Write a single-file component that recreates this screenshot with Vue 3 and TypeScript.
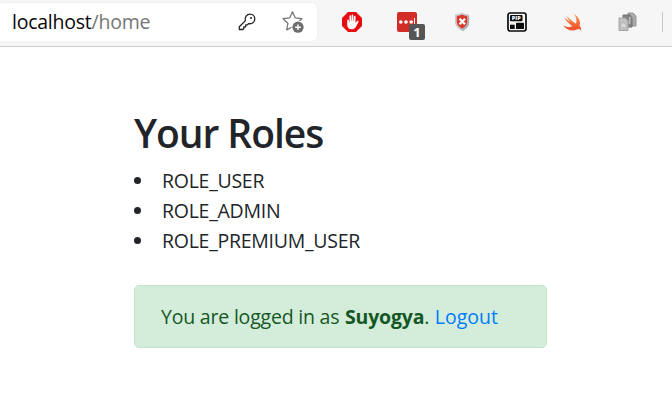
<script setup lang="ts">
const roles: string[] = ['ROLE_USER', 'ROLE_ADMIN', 'ROLE_PREMIUM_USER']
const username = 'Suyogya'
</script>

<template>
  <div class="page">
    <header class="toolbar">
      <div class="address">
        <span class="url">localhost<span class="path">/home</span></span>
        <svg class="key" width="20" height="20" viewBox="0 0 20 20" fill="none" stroke="#222" stroke-width="1.3" stroke-linejoin="round">
          <path d="M8.3 8.9C7.5 5.2 9.8 2.2 13 2.2c2.7 0 4.8 2 4.8 4.7 0 3.2-2.9 5.5-6.2 4.7l-1.2 1.3H8.7v1.9H6.8v1.9l-.9.8H2.3v-2.7z" />
          <circle cx="14" cy="6" r="1" fill="#222" stroke="none" />
        </svg>
        <svg class="star" width="24" height="24" viewBox="0 0 24 24">
          <path d="M11.5 1.8l2.8 6.1 6.6.8-4.900 4.600 1.200 6.600-5.700-3.200-5.800 3.200 1.200-6.600L2 8.700l6.700-.8z" fill="none" stroke="#757575" stroke-width="1.25" stroke-linejoin="round" />
          <circle cx="17" cy="17.2" r="6.4" fill="#fff" />
          <circle cx="17" cy="17.2" r="5.6" fill="#6e6e6e" />
          <path d="M14.2 17.2h5.6M17 14.4v5.6" stroke="#fff" stroke-width="1.4" />
        </svg>
      </div>
      <div class="extensions">
        <svg width="22" height="22" viewBox="0 0 22 22">
          <path d="M7 1h8l6 6v8l-6 6H7l-6-6V7z" fill="#e60c12" />
          <path d="M6.2 9.5v4.3c0 3 1.9 4.5 4.7 4.5 2.4 0 3.6-1.4 4.6-3.6l2-4c.3-.9-.8-1.4-1.4-.7l-1.6 2V5.6c0-1.1-1.5-1.1-1.6 0l-.2 4.500h-.3l-.2-5.800c0-1.200-1.600-1.200-1.600 0v5.800h-.3l-.3-5c-.1-1.100-1.600-1-1.600.1l.2 5.600h-.4l-.4-1.700c-.2-1-1.600-.7-1.600.4z" fill="#fff" />
        </svg>
        <div class="badged">
          <svg width="22" height="22" viewBox="0 0 22 22">
            <rect x="1" y="1" width="20" height="20" rx="2" fill="#d32d27" />
            <circle cx="4.8" cy="11" r="1.8" fill="#fff" />
            <circle cx="10" cy="11" r="1.8" fill="#fff" />
            <circle cx="15.2" cy="11" r="1.8" fill="#fff" />
            <path d="M18.5 7v6" stroke="#fff" />
          </svg>
          <span class="badge">1</span>
        </div>
        <svg width="22" height="22" viewBox="0 0 22 22">
          <path d="M11 1.5c2 1.4 4.4 1.9 7 1.9v7.3c0 4.2-3.1 7-7 9.4-3.9-2.4-7-5.2-7-9.4V3.4c2.6 0 5-.5 7-1.9z" fill="#c5ccce" />
          <path d="M12 4c1.6 1 3.3 1.4 4.5 1.5l1.7-1v7c0 4-3.3 6.5-6.8 8.8z" fill="#a9b2b5" />
          <path d="M11 3.6c1.5.8 3.2 1.2 5.2 1.3v5.9c0 3.2-2.4 5.1-5.2 6.9-2.8-1.8-5.2-3.7-5.2-6.9V4.900c2-.1 3.700-.5 5.200-1.300z" fill="#df382c" />
          <path d="M8.5 7.8l5.5 5.5m0-5.5l-5.5 5.5" stroke="#fff" stroke-width="2.2" />
        </svg>
        <svg width="22" height="22" viewBox="0 0 22 22">
          <rect x="2" y="2" width="18" height="18" rx="2.2" fill="#f7f7f7" stroke="#0b0b0b" stroke-width="1.7" />
          <rect x="4" y="4" width="12.5" height="6.3" rx="1" fill="#0b0b0b" />
          <text x="10.3" y="9.2" class="pip">PIP</text>
          <rect x="4" y="13.7" width="4.7" height="4.3" fill="#0b0b0b" />
          <rect x="10" y="11.8" width="8" height="6.2" rx=".6" fill="#0b0b0b" />
        </svg>
        <svg width="22" height="22" viewBox="0 0 22 22">
          <defs>
            <linearGradient id="swift" x1="0" y1="0" x2="0" y2="1">
              <stop offset="0" stop-color="#f9994b" />
              <stop offset="1" stop-color="#f24a2b" />
            </linearGradient>
          </defs>
          <path d="M13 2.7c5.3 3.8 6.9 8.4 5.6 12.1 1.8 2.2 1.8 4 1.4 4.9-.9-1.8-2.4-2.1-4.4-1.1-4.5 2-10.2.6-14-4.6 3.5 2.2 7.2 2.7 9.6 1.1C7.5 12.5 4.8 9.3 3 6.2l7 5.3C8.4 9.6 6.4 6.7 5.2 4.4c2.9 3 6.2 5.9 9.8 8.3 1.1-3.3.3-6.500-2-10z" fill="url(#swift)" />
        </svg>
        <svg width="22" height="22" viewBox="0 0 22 22">
          <path d="M12 2h5l3 3v10h-8z" fill="#aaa" stroke="#999" />
          <path d="M7 4h7l2 3v9H7z" fill="#858585" stroke="#707070" />
          <path d="M13 6h2.5l-1 2v5h-2z" fill="#b8b8b8" />
          <path d="M3 7h6l3 3v9.5H3z" fill="#c2c2c2" stroke="#a4a4a4" />
          <path d="M5 12h3l2 2v3H5z" fill="#d9d9d9" stroke="#b0b0b0" stroke-width=".7" />
        </svg>
      </div>
      <span class="divider"></span>
    </header>
    <main class="content">
      <h1>Your Roles</h1>
      <ul>
        <li v-for="role in roles" :key="role"><span>{{ role }}</span></li>
      </ul>
      <div class="alert">
        <span class="message">You are logged in as</span>
        <strong>{{ username }}</strong>
        <span class="dot">.</span>
        <a>Logout</a>
      </div>
    </main>
  </div>
</template>

<style>
body {
  background: #fff;
}
</style>

<style scoped>
.page {
  height: 408px;
  overflow: hidden;
  font-family: "Open Sans", "Noto Sans", sans-serif;
  color: #212529;
}
.toolbar {
  box-sizing: border-box;
  height: 47px;
  padding-top: 3px;
  border-bottom: 1px solid #cecece;
  background: #f6f6f6;
  display: flex;
  align-items: flex-start;
}
.address {
  box-sizing: border-box;
  width: 317px;
  height: 38px;
  padding-left: 12px;
  border-radius: 0 5px 5px 0;
  background: #fff;
  box-shadow: 0 0 2px rgba(0, 0, 0, 0.08);
  display: flex;
  align-items: center;
}
.url {
  width: 225px;
  color: #080808;
  font-size: 19.5px;
  line-height: 38px;
  letter-spacing: -0.24px;
}
.path {
  color: #767676;
}
.star {
  margin-left: 24px;
}
.extensions {
  display: flex;
  gap: 33px;
  margin: 8px 0 0 24px;
}
.extensions svg {
  display: block;
}
.badged {
  position: relative;
}
.badge {
  position: absolute;
  left: 13px;
  top: 13px;
  width: 16px;
  height: 16px;
  border-radius: 2px;
  background: #555;
  color: #fff;
  font-size: 13px;
  font-weight: 700;
  line-height: 16px;
  text-align: center;
}
.pip {
  fill: #fff;
  font-size: 5.5px;
  font-weight: 800;
  text-anchor: middle;
}
.divider {
  width: 1px;
  height: 20px;
  margin: 9px 0 0 24px;
  background: #c8c8c8;
}
.content {
  width: 413px;
  padding: 62px 0 0 134px;
}
h1 {
  margin: 0 0 8px;
  font-size: 39px;
  line-height: 48px;
  font-weight: 600;
  letter-spacing: -1.05px;
}
ul {
  margin: 0;
  padding: 0;
  list-style: none;
}
li {
  display: flex;
  align-items: center;
  height: 30px;
  font-size: 19.5px;
  letter-spacing: -0.26px;
}
li::before {
  content: "";
  width: 7px;
  height: 7px;
  margin-right: 21px;
  border-radius: 50%;
  background: #212529;
}
.alert {
  box-sizing: border-box;
  display: flex;
  height: 63px;
  margin-top: 30px;
  padding-left: 26px;
  border: 1px solid #c3e6cb;
  border-radius: 5px;
  background: #d4edda;
  color: #155724;
  font-size: 19.5px;
  line-height: 61px;
  white-space: nowrap;
}
.message {
  width: 184px;
  letter-spacing: -0.2px;
}
strong {
  letter-spacing: -0.2px;
}
.dot {
  width: 10.5px;
}
a {
  color: #007bff;
}
</style>
